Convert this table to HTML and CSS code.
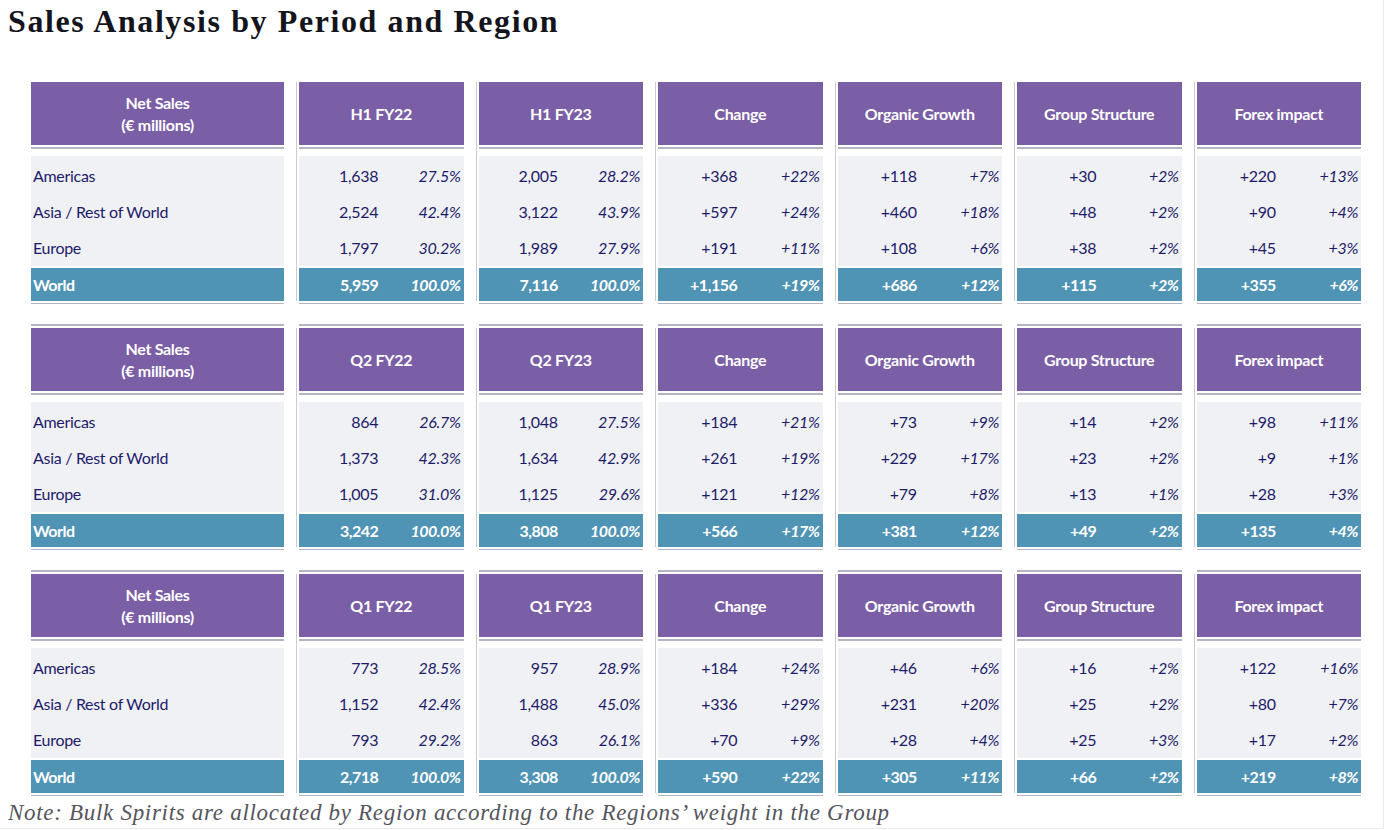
FILE: index.html
```html
<!DOCTYPE html>
<html lang="en">
<head>
<meta charset="utf-8">
<title>Sales Analysis by Period and Region</title>
<link rel="stylesheet" href="styles.css">
</head>
<body>
<div class="page">
  <h1 class="title">Sales Analysis by Period and Region</h1>

  <section class="block">
    <div class="col label">
      <div class="hd">Net Sales<br>(€ millions)</div>
      <div class="bd">
        <div class="row">Americas</div>
        <div class="row">Asia / Rest of World</div>
        <div class="row">Europe</div>
      </div>
      <div class="tot">World</div>
    </div>
    <div class="col data">
      <div class="hd">H1 FY22</div>
      <div class="bd">
        <div class="row"><span>1,638</span><em>27.5%</em></div>
        <div class="row"><span>2,524</span><em>42.4%</em></div>
        <div class="row"><span>1,797</span><em>30.2%</em></div>
      </div>
      <div class="tot"><span>5,959</span><em>100.0%</em></div>
    </div>
    <div class="col data">
      <div class="hd">H1 FY23</div>
      <div class="bd">
        <div class="row"><span>2,005</span><em>28.2%</em></div>
        <div class="row"><span>3,122</span><em>43.9%</em></div>
        <div class="row"><span>1,989</span><em>27.9%</em></div>
      </div>
      <div class="tot"><span>7,116</span><em>100.0%</em></div>
    </div>
    <div class="col data">
      <div class="hd">Change</div>
      <div class="bd">
        <div class="row"><span>+368</span><em>+22%</em></div>
        <div class="row"><span>+597</span><em>+24%</em></div>
        <div class="row"><span>+191</span><em>+11%</em></div>
      </div>
      <div class="tot"><span>+1,156</span><em>+19%</em></div>
    </div>
    <div class="col data">
      <div class="hd">Organic Growth</div>
      <div class="bd">
        <div class="row"><span>+118</span><em>+7%</em></div>
        <div class="row"><span>+460</span><em>+18%</em></div>
        <div class="row"><span>+108</span><em>+6%</em></div>
      </div>
      <div class="tot"><span>+686</span><em>+12%</em></div>
    </div>
    <div class="col data">
      <div class="hd">Group Structure</div>
      <div class="bd">
        <div class="row"><span>+30</span><em>+2%</em></div>
        <div class="row"><span>+48</span><em>+2%</em></div>
        <div class="row"><span>+38</span><em>+2%</em></div>
      </div>
      <div class="tot"><span>+115</span><em>+2%</em></div>
    </div>
    <div class="col data">
      <div class="hd">Forex impact</div>
      <div class="bd">
        <div class="row"><span>+220</span><em>+13%</em></div>
        <div class="row"><span>+90</span><em>+4%</em></div>
        <div class="row"><span>+45</span><em>+3%</em></div>
      </div>
      <div class="tot"><span>+355</span><em>+6%</em></div>
    </div>
  </section>

  <section class="block">
    <div class="col label">
      <div class="hd">Net Sales<br>(€ millions)</div>
      <div class="bd">
        <div class="row">Americas</div>
        <div class="row">Asia / Rest of World</div>
        <div class="row">Europe</div>
      </div>
      <div class="tot">World</div>
    </div>
    <div class="col data">
      <div class="hd">Q2 FY22</div>
      <div class="bd">
        <div class="row"><span>864</span><em>26.7%</em></div>
        <div class="row"><span>1,373</span><em>42.3%</em></div>
        <div class="row"><span>1,005</span><em>31.0%</em></div>
      </div>
      <div class="tot"><span>3,242</span><em>100.0%</em></div>
    </div>
    <div class="col data">
      <div class="hd">Q2 FY23</div>
      <div class="bd">
        <div class="row"><span>1,048</span><em>27.5%</em></div>
        <div class="row"><span>1,634</span><em>42.9%</em></div>
        <div class="row"><span>1,125</span><em>29.6%</em></div>
      </div>
      <div class="tot"><span>3,808</span><em>100.0%</em></div>
    </div>
    <div class="col data">
      <div class="hd">Change</div>
      <div class="bd">
        <div class="row"><span>+184</span><em>+21%</em></div>
        <div class="row"><span>+261</span><em>+19%</em></div>
        <div class="row"><span>+121</span><em>+12%</em></div>
      </div>
      <div class="tot"><span>+566</span><em>+17%</em></div>
    </div>
    <div class="col data">
      <div class="hd">Organic Growth</div>
      <div class="bd">
        <div class="row"><span>+73</span><em>+9%</em></div>
        <div class="row"><span>+229</span><em>+17%</em></div>
        <div class="row"><span>+79</span><em>+8%</em></div>
      </div>
      <div class="tot"><span>+381</span><em>+12%</em></div>
    </div>
    <div class="col data">
      <div class="hd">Group Structure</div>
      <div class="bd">
        <div class="row"><span>+14</span><em>+2%</em></div>
        <div class="row"><span>+23</span><em>+2%</em></div>
        <div class="row"><span>+13</span><em>+1%</em></div>
      </div>
      <div class="tot"><span>+49</span><em>+2%</em></div>
    </div>
    <div class="col data">
      <div class="hd">Forex impact</div>
      <div class="bd">
        <div class="row"><span>+98</span><em>+11%</em></div>
        <div class="row"><span>+9</span><em>+1%</em></div>
        <div class="row"><span>+28</span><em>+3%</em></div>
      </div>
      <div class="tot"><span>+135</span><em>+4%</em></div>
    </div>
  </section>

  <section class="block">
    <div class="col label">
      <div class="hd">Net Sales<br>(€ millions)</div>
      <div class="bd">
        <div class="row">Americas</div>
        <div class="row">Asia / Rest of World</div>
        <div class="row">Europe</div>
      </div>
      <div class="tot">World</div>
    </div>
    <div class="col data">
      <div class="hd">Q1 FY22</div>
      <div class="bd">
        <div class="row"><span>773</span><em>28.5%</em></div>
        <div class="row"><span>1,152</span><em>42.4%</em></div>
        <div class="row"><span>793</span><em>29.2%</em></div>
      </div>
      <div class="tot"><span>2,718</span><em>100.0%</em></div>
    </div>
    <div class="col data">
      <div class="hd">Q1 FY23</div>
      <div class="bd">
        <div class="row"><span>957</span><em>28.9%</em></div>
        <div class="row"><span>1,488</span><em>45.0%</em></div>
        <div class="row"><span>863</span><em>26.1%</em></div>
      </div>
      <div class="tot"><span>3,308</span><em>100.0%</em></div>
    </div>
    <div class="col data">
      <div class="hd">Change</div>
      <div class="bd">
        <div class="row"><span>+184</span><em>+24%</em></div>
        <div class="row"><span>+336</span><em>+29%</em></div>
        <div class="row"><span>+70</span><em>+9%</em></div>
      </div>
      <div class="tot"><span>+590</span><em>+22%</em></div>
    </div>
    <div class="col data">
      <div class="hd">Organic Growth</div>
      <div class="bd">
        <div class="row"><span>+46</span><em>+6%</em></div>
        <div class="row"><span>+231</span><em>+20%</em></div>
        <div class="row"><span>+28</span><em>+4%</em></div>
      </div>
      <div class="tot"><span>+305</span><em>+11%</em></div>
    </div>
    <div class="col data">
      <div class="hd">Group Structure</div>
      <div class="bd">
        <div class="row"><span>+16</span><em>+2%</em></div>
        <div class="row"><span>+25</span><em>+2%</em></div>
        <div class="row"><span>+25</span><em>+3%</em></div>
      </div>
      <div class="tot"><span>+66</span><em>+2%</em></div>
    </div>
    <div class="col data">
      <div class="hd">Forex impact</div>
      <div class="bd">
        <div class="row"><span>+122</span><em>+16%</em></div>
        <div class="row"><span>+80</span><em>+7%</em></div>
        <div class="row"><span>+17</span><em>+2%</em></div>
      </div>
      <div class="tot"><span>+219</span><em>+8%</em></div>
    </div>
  </section>

  <p class="note">Note: Bulk Spirits are allocated by Region according to the Regions’ weight in the Group</p>
</div>
</body>
</html>
```

FILE: styles.css
```css
* { box-sizing: border-box; }

html, body {
  margin: 0;
  padding: 0;
  background: #ffffff;
}

.page {
  width: 1384px;
  height: 829px;
  padding: 3px 0 0 8px;
  border-right: 1px solid #e9e9ee;
  border-bottom: 1px solid #e9e9ee;
  overflow: hidden;
}

.title {
  margin: 0;
  font-family: "Liberation Serif", "Times New Roman", serif;
  font-weight: bold;
  font-size: 32px;
  line-height: 37px;
  letter-spacing: 1.6px;
  color: #14141c;
}

.block {
  display: grid;
  grid-template-columns: 253px repeat(6, 167.5px);
  column-gap: 12px;
  margin-left: 23px;
  font-family: Lato, "Liberation Sans", sans-serif;
  font-size: 16px;
  color: #1d1c6a;
}

.title + .block { margin-top: 42px; }
.block + .block { margin-top: 27px; }

.col {
  display: flex;
  flex-direction: column;
}

.col.data {
  border-left: 1px solid #c9cad3;
  padding-left: 2px;
}

.hd {
  height: 63px;
  background: #7a5ea6;
  color: #ffffff;
  font-weight: bold;
  font-size: 16px;
  line-height: 22px;
  letter-spacing: -0.3px;
  display: flex;
  align-items: center;
  justify-content: center;
  text-align: center;
  box-shadow: 0 2px 0 #ffffff, 0 4px 0 #b3b5c2;
}

.block + .block .hd {
  box-shadow: 0 2px 0 #ffffff, 0 4px 0 #b3b5c2, 0 -2px 0 #ffffff, 0 -4px 0 #b3b5c2;
}

.bd {
  margin-top: 11px;
  height: 110px;
  padding-top: 1px;
  background: #f0f1f4;
}

.row {
  height: 36px;
  display: grid;
  grid-template-columns: 1fr 1fr;
  align-items: center;
  letter-spacing: -0.3px;
}

.label .row,
.label .tot {
  display: flex;
  padding-left: 2px;
}

.row span,
.row em,
.tot span,
.tot em {
  text-align: right;
  padding-right: 3px;
}

em {
  font-style: italic;
}

.tot {
  margin-top: 2px;
  height: 33px;
  background: #4f93b5;
  color: #ffffff;
  font-weight: bold;
  display: grid;
  grid-template-columns: 1fr 1fr;
  align-items: center;
  letter-spacing: -0.5px;
  box-shadow: 0 2px 0 #ffffff, 0 3px 0 #b3b5c2;
}

.note {
  margin: 6px 0 0 0;
  font-family: "Liberation Serif", "Times New Roman", serif;
  font-style: italic;
  font-size: 23px;
  line-height: 27px;
  letter-spacing: 0.7px;
  color: #55555d;
}
```
